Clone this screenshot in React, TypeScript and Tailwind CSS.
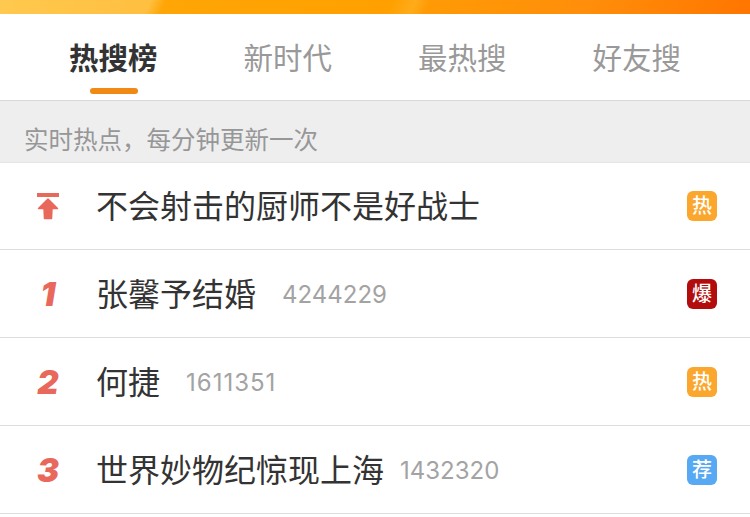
import React from "react";

const cjk = "font-['Inter','Noto_Sans_CJK_SC',sans-serif]";

const tabs = ["热搜榜", "新时代", "最热搜", "好友搜"];

const rows = [
  { rank: "top", title: "不会射击的厨师不是好战士", count: "", countClass: "", tag: "热", tagColor: "bg-[#fba62c]" },
  { rank: "1", title: "张馨予结婚", count: "4244229", countClass: "ml-[26px]", tag: "爆", tagColor: "bg-[#b30c0c]" },
  { rank: "2", title: "何捷", count: "1611351", countClass: "ml-[26px] tracking-[1px]", tag: "热", tagColor: "bg-[#fba62c]" },
  { rank: "3", title: "世界妙物纪惊现上海", count: "1432320", countClass: "ml-[16px]", tag: "荐", tagColor: "bg-[#56a9f2]" },
];

function TopIcon() {
  return (
    <svg width="22" height="27" viewBox="0 0 22 27" className="text-[#e9685c]">
      <rect x="0" y="0" width="22" height="4" fill="currentColor" />
      <path
        d="M11 6 L20.5 15.5 L15 15.5 L14.5 25.5 L7.5 25.5 L7 15.5 L1.5 15.5 Z"
        fill="currentColor"
        stroke="currentColor"
        strokeWidth="1.5"
        strokeLinejoin="round"
      />
    </svg>
  );
}

function App() {
  return (
    <div className={`w-[750px] h-[517px] overflow-hidden bg-white ${cjk}`}>
      <div className="h-[14px] bg-[linear-gradient(115deg,#ffc94f_0%,#ffbf40_20%,#ffa506_22%,#ffa000_52%,#ffab1a_55%,#ff9a05_57%,#ff8e0a_78%,#ff7500_100%)]" />

      <div className="h-[87px] flex px-[26px] border-b border-[#d9d9d9]">
        {tabs.map((tab, i) => (
          <div key={tab} className="w-[175px] relative flex justify-center pt-[24px]">
            <span
              className={`text-[29.5px] leading-[40px] ${
                i === 0 ? "font-bold text-[#333333]" : "text-[#999999]"
              }`}
            >
              {tab}
            </span>
            {i === 0 && (
              <div className="absolute left-[64px] bottom-[6px] w-[48px] h-[6px] rounded-full bg-[#f08a14]" />
            )}
          </div>
        ))}
      </div>

      <div className="h-[62px] bg-[#eeeeef] border-b border-[#e4e4e4] pl-[24px] pt-[16px] flex items-center">
        <span className="text-[24.5px] leading-[32px] text-[#979797]">实时热点，每分钟更新一次</span>
      </div>

      <div>
        {rows.map((row) => (
          <div
            key={row.rank}
            className="h-[88px] first:h-[87px] flex items-center border-b border-[#dddddd] pl-[37px] pr-[33px]"
          >
            <div className="w-[59px] shrink-0">
              {row.rank === "top" ? (
                <TopIcon />
              ) : (
                <span className="block w-[22px] text-center text-[33px] leading-[32px] font-black italic text-[#e9685c]">
                  {row.rank}
                </span>
              )}
            </div>
            <span className="mt-[2px] text-[32px] leading-[44px] text-[#333333] whitespace-nowrap">{row.title}</span>
            {row.count && (
              <span className={`mt-[2px] text-[24px] leading-[32px] text-[#a3a3a3] ${row.countClass}`}>{row.count}</span>
            )}
            <div
              className={`ml-auto w-[30px] h-[30px] rounded-[6px] flex items-center justify-center text-[20px] leading-none font-medium text-white ${row.tagColor}`}
            >
              {row.tag}
            </div>
          </div>
        ))}
      </div>
    </div>
  );
}

export default App;
